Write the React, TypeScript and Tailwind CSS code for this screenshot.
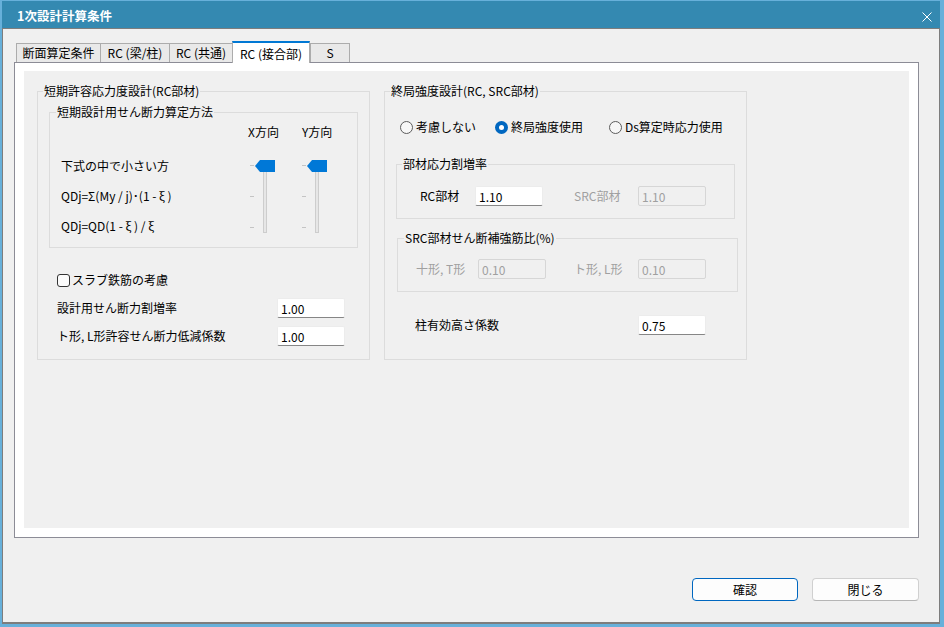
import React from "react";

const tabs = [
  { label: "断面算定条件", w: "w-[84px]" },
  { label: "RC (梁/柱)", w: "w-[69px]" },
  { label: "RC (共通)", w: "w-[63px]" },
  { label: "RC (接合部)", w: "w-[78px]", active: true },
  { label: "S", w: "w-[40px]" },
];

function Slider() {
  return (
    <svg className="mt-[18px] block" width="30" height="78" viewBox="0 0 30 78">
      <rect x="15.5" y="12.5" width="3" height="62" fill="#e6e6e6" stroke="#cdcdcd" />
      {[7, 38, 69].map((y) => (
        <line key={y} x1="2" x2="6" y1={y + 0.5} y2={y + 0.5} stroke="#c4c4c4" />
      ))}
      <path d="M7 8 L12 2 H27 V14 H12 Z" fill="#0078d7" />
    </svg>
  );
}

function TextBox({ value, disabled }: { value: string; disabled?: boolean }) {
  return (
    <input
      readOnly
      value={value}
      className={
        disabled
          ? "h-[20px] w-[68px] rounded-[2px] border border-[#d6d6d6] bg-[#f0f0f0] px-[3px] text-[#a0a0a0] outline-none"
          : "h-[20px] w-[68px] rounded-[2px] border border-[#ececec] border-b-[#868686] bg-white px-[3px] text-black outline-none"
      }
    />
  );
}

function Radio({
  label,
  checked,
  className = "",
}: {
  label: string;
  checked?: boolean;
  className?: string;
}) {
  return (
    <div className={`flex items-center ${className}`}>
      {checked ? (
        <span className="flex h-[13px] w-[13px] items-center justify-center rounded-full bg-[#0067c0]">
          <span className="h-[5px] w-[5px] rounded-full bg-white" />
        </span>
      ) : (
        <span className="h-[13px] w-[13px] rounded-full border border-[#5c5c5c] bg-[#f7f7f7]" />
      )}
      <span className="ml-[3px]">{label}</span>
    </div>
  );
}

export default function App() {
  return (
    <div className="flex h-[627px] w-[944px] flex-col bg-[#67b0da] pb-[3px] pl-[2px] pr-[4px] pt-[1px] font-['Noto_Sans_CJK_JP',sans-serif] text-[12px] leading-[16px] text-black">
      {/* title bar */}
      <div className="flex h-[27px] shrink-0 items-center justify-between bg-[#3489b1]">
        <span className="pl-[15px] pt-[2px] text-[12.5px] font-bold text-white">1次設計計算条件</span>
        <svg className="mr-[8px] mt-[5px]" width="10" height="10" viewBox="0 0 10 10">
          <path d="M0.5 0.5 L9.5 9.5 M9.5 0.5 L0.5 9.5" stroke="#fff" strokeWidth="1" />
        </svg>
      </div>

      {/* body */}
      <div className="flex flex-1 flex-col border-x border-b-2 border-t border-[#7d7d7d] bg-[#f0f0f0]">
        <div className="ml-[13px] flex items-end pt-[12px]">
          {tabs.map((t) =>
            t.active ? (
              <div
                key={t.label}
                className={`${t.w} relative z-10 -mb-px flex h-[22px] items-center justify-center border-x border-t-2 border-x-[#acacac] border-t-[#0078d4] bg-white pt-[1px]`}
              >
                {t.label}
              </div>
            ) : (
              <div
                key={t.label}
                className={`${t.w} flex h-[19px] items-center justify-center border-l border-t border-[#acacac] bg-[#e9e9e9] last:border-r`}
              >
                {t.label}
              </div>
            ),
          )}
        </div>

        <div className="ml-[11px] h-[476px] w-[905px] border border-[#8c8c96] bg-white px-[9px] pb-[9px] pt-[8px]">
          <div className="flex h-full items-start bg-[#f0f0f0] pl-[13px]">
            {/* left group */}
            <fieldset className="mt-[12px] h-[277px] w-[333px] border border-[#dcdcdc]">
              <legend className="ml-[5px] px-[1px] leading-[16px]">短期許容応力度設計(RC部材)</legend>
              <fieldset className="mx-[11px] mt-[5px] h-[144px] border border-[#dcdcdc]">
                <legend className="ml-[6px] px-[1px] leading-[16px]">短期設計用せん断力算定方法</legend>
                <div className="flex">
                  <div className="flex w-[198px] flex-col gap-[14px] pl-[11px] pt-[38px]">
                    <div>下式の中で小さい方</div>
                    <div>QDj=Σ(My / j)･(1 - ξ )</div>
                    <div>QDj=QD(1 - ξ ) / ξ</div>
                  </div>
                  <div className="w-[52px] pt-[4px]">
                    <div>X方向</div>
                    <Slider />
                  </div>
                  <div className="pt-[4px]">
                    <div className="pl-[2px]">Y方向</div>
                    <Slider />
                  </div>
                </div>
              </fieldset>

              <div className="mt-[24px] flex items-center pl-[19px]">
                <span className="h-[13px] w-[13px] rounded-[3px] border border-[#333] bg-[#fbfbfb]" />
                <span className="ml-[2px]">スラブ鉄筋の考慮</span>
              </div>
              <div className="mt-[10px] flex items-center pl-[19px]">
                <span className="w-[220px]">設計用せん断力割増率</span>
                <TextBox value="1.00" />
              </div>
              <div className="mt-[8px] flex items-center pl-[19px]">
                <span className="w-[220px]">ト形, L形許容せん断力低減係数</span>
                <TextBox value="1.00" />
              </div>
            </fieldset>

            {/* right group */}
            <fieldset className="ml-[14px] mt-[12px] h-[277px] w-[363px] border border-[#dcdcdc]">
              <legend className="ml-[5px] px-[1px] leading-[16px]">終局強度設計(RC, SRC部材)</legend>
              <div className="mt-[20px] flex items-center pl-[15px]">
                <Radio className="w-[95px]" label="考慮しない" />
                <Radio className="w-[114px]" label="終局強度使用" checked />
                <Radio label="Ds算定時応力使用" />
              </div>

              <fieldset className="ml-[11px] mt-[21px] h-[63px] w-[339px] border border-[#dcdcdc]">
                <legend className="ml-[5px] px-[1px] leading-[16px]">部材応力割増率</legend>
                <div className="mt-[14px] flex items-center pl-[23px]">
                  <span className="w-[55px]">RC部材</span>
                  <TextBox value="1.10" />
                  <span className="ml-[31px] w-[64px] text-[#a0a0a0]">SRC部材</span>
                  <TextBox value="1.10" disabled />
                </div>
              </fieldset>

              <fieldset className="ml-[12px] mt-[11px] h-[62px] w-[341px] border border-[#dcdcdc]">
                <legend className="ml-[6px] px-[1px] leading-[16px]">SRC部材せん断補強筋比(%)</legend>
                <div className="mt-[13px] flex items-center pl-[18px]">
                  <span className="w-[62px] text-[#a0a0a0]">十形, T形</span>
                  <TextBox value="0.10" disabled />
                  <span className="ml-[28px] w-[64px] text-[#a0a0a0]">ト形, L形</span>
                  <TextBox value="0.10" disabled />
                </div>
              </fieldset>

              <div className="mt-[23px] flex items-center pl-[30px]">
                <span className="w-[223px]">柱有効高さ係数</span>
                <TextBox value="0.75" />
              </div>
            </fieldset>
          </div>
        </div>

        <div className="mt-[40px] flex justify-end gap-[14px] pr-[20px]">
          <button className="h-[23px] w-[106px] rounded-[4px] border border-[#0067c0] bg-[#fdfdfd]">
            確認
          </button>
          <button className="h-[23px] w-[107px] rounded-[4px] border border-[#d0d0d0] border-b-[#b5b5b5] bg-[#fdfdfd]">
            閉じる
          </button>
        </div>
      </div>
    </div>
  );
}
